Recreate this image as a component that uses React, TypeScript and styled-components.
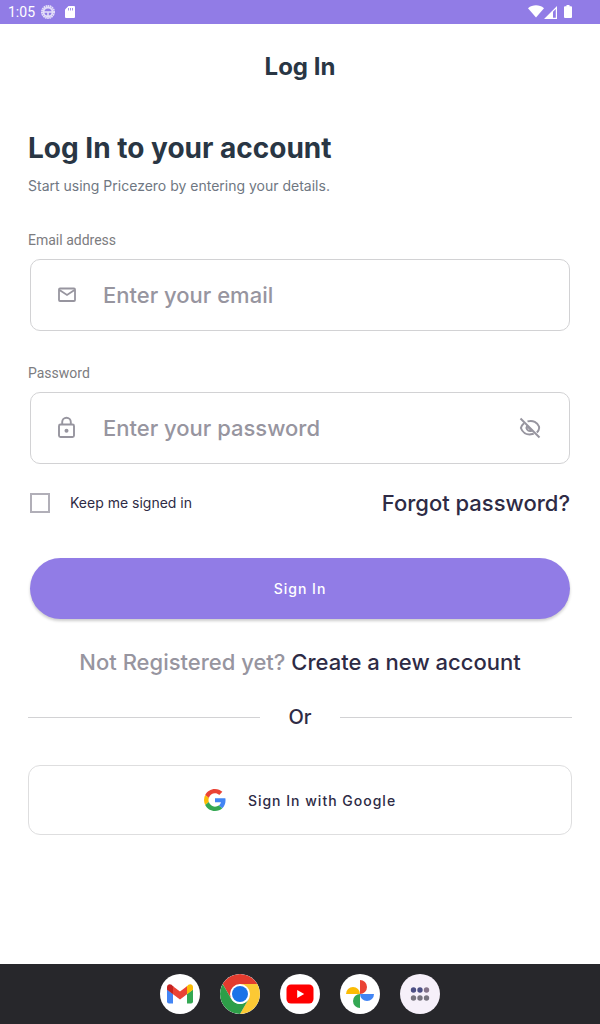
import React from "react";
import styled, { createGlobalStyle } from "styled-components";

const color = {
  brand: "#917ce6",
  heading: "#293644",
  ink: "#2e2b45",
  muted: "#97959f",
  label: "#7c7c80",
  line: "#d2d2d4",
  dock: "#27272b",
};

const GlobalStyle = createGlobalStyle`
  * { box-sizing: border-box; }
  body {
    margin: 0;
    background: #fff;
    color: ${color.ink};
    font-family: Inter, "Liberation Sans", sans-serif;
  }
  button, input { font-family: inherit; }
`;

const Screen = styled.div`
  min-height: 100vh;
  display: flex;
  flex-direction: column;
`;

const StatusBar = styled.header`
  height: 24px;
  padding: 0 28px 0 8px;
  display: flex;
  align-items: center;
  justify-content: space-between;
  background: ${color.brand};
  color: #fff;
  font: 14px/24px Roboto, sans-serif;
`;

const StatusGroup = styled.div<{ $gap: number }>`
  display: flex;
  align-items: center;
  gap: ${(p) => p.$gap}px;
  svg { display: block; }
`;

const Main = styled.main`
  flex: 1;
  padding: 28px 28px 40px;
`;

const PageTitle = styled.h1`
  margin: 0 0 49px;
  font-size: 24px;
  line-height: 30px;
  font-weight: 700;
  text-align: center;
  color: ${color.heading};
`;

const Heading = styled.h2`
  margin: 0 0 11px;
  font-size: 28px;
  line-height: 34px;
  font-weight: 700;
  color: ${color.heading};
`;

const Intro = styled.p`
  margin: 0 0 34px;
  font-size: 14px;
  line-height: 20px;
  color: #6f7782;
`;

const Form = styled.form`
  display: flex;
  flex-direction: column;
`;

const FieldLabel = styled.label`
  font-size: 14px;
  line-height: 20px;
  font-family: Roboto, sans-serif;
  color: ${color.label};
`;

const FieldBox = styled.div<{ $after: number }>`
  height: 72px;
  margin: 9px 2px ${(p) => p.$after}px;
  padding: 0 27px 0 24px;
  display: flex;
  align-items: center;
  gap: 24px;
  border: 1px solid ${color.line};
  border-radius: 10px;
  color: ${color.muted};
  svg { display: block; flex: none; }
`;

const TextInput = styled.input`
  flex: 1;
  min-width: 0;
  height: 40px;
  padding: 0;
  border: 0;
  outline: 0;
  background: transparent;
  color: ${color.ink};
  font-size: 22px;
  font-weight: 500;
  &::placeholder { color: ${color.muted}; opacity: 1; }
`;

const IconButton = styled.button`
  padding: 0;
  border: 0;
  background: none;
  color: inherit;
`;

const OptionsRow = styled.div`
  margin: 0 2px 41px;
  display: flex;
  align-items: center;
  justify-content: space-between;
  line-height: 28px;
`;

const CheckLabel = styled.label`
  display: flex;
  align-items: center;
  gap: 20px;
  font-size: 14px;
`;

const Checkbox = styled.input`
  appearance: none;
  width: 20px;
  height: 20px;
  margin: 0;
  border: 2px solid #b1afb8;
  &:checked { background: ${color.brand}; }
`;

const TextLink = styled.a`
  font-size: 22px;
  line-height: 28px;
  font-weight: 500;
  color: ${color.ink};
  text-decoration: none;
`;

const SubmitButton = styled.button`
  height: 61px;
  margin: 0 2px 29px;
  border: 0;
  border-radius: 31px;
  background: ${color.brand};
  color: #fff;
  font-size: 14px;
  font-weight: 500;
  letter-spacing: 1px;
  box-shadow: 0 2px 3px rgba(0, 0, 0, 0.2);
`;

const Register = styled.p`
  margin: 0 0 27px;
  font-size: 22px;
  line-height: 28px;
  font-weight: 500;
  text-align: center;
  color: ${color.muted};
`;

const Divider = styled.div`
  margin-bottom: 34px;
  display: flex;
  align-items: center;
  gap: 28px;
  font-size: 20px;
  line-height: 28px;
  font-weight: 500;
  &::before, &::after {
    content: "";
    flex: 1;
    height: 1px;
    background: ${color.line};
  }
`;

const GoogleButton = styled.button`
  width: 100%;
  height: 70px;
  padding: 0;
  display: flex;
  align-items: center;
  justify-content: center;
  gap: 22px;
  border: 1px solid #dededf;
  border-radius: 12px;
  background: #fff;
  color: ${color.ink};
  font-size: 14px;
  font-weight: 500;
  letter-spacing: 1px;
`;

const Dock = styled.nav`
  height: 60px;
  display: flex;
  align-items: center;
  justify-content: center;
  gap: 20px;
  background: ${color.dock};
`;

const AppButton = styled.button<{ $tint?: string }>`
  width: 40px;
  height: 40px;
  padding: 0;
  border: 0;
  border-radius: 50%;
  overflow: hidden;
  background: ${(p) => p.$tint ?? "#fff"};
  svg { display: block; }
`;

const MailIcon = () => (
  <svg width="24" height="24" viewBox="0 0 24 24" fill="none" stroke="currentColor" strokeWidth="1.800">
    <rect x="4" y="5.500" width="16" height="12.500" rx="1" />
    <path d="M4.500 7 12 12l7.500-5" />
  </svg>
);

const LockIcon = () => (
  <svg width="24" height="24" viewBox="0 0 24 24" fill="none" stroke="currentColor" strokeWidth="1.900">
    <rect x="4" y="8.500" width="15" height="12.500" rx="1.500" />
    <path d="M7.200 8.500V6a4.300 4.300 0 0 1 8.600 0v2.500" />
    <circle cx="11.500" cy="14.800" r="2" fill="currentColor" stroke="none" />
  </svg>
);

const EyeOffIcon = () => (
  <svg width="24" height="24" viewBox="0 0 24 24" fill="none" stroke="currentColor" strokeWidth="2">
    <path d="m2.500 2.500 19 19" />
    <path d="M9.500 5.400C15 3.700 19.500 6.500 21 10.500c.4 1.300.2 2.500-.4 3.600-.4.900-1 1.700-1.800 2.400" />
    <path d="M6 7.200C4.500 8.400 3.300 10 2.900 12c1.500 4.500 5.600 6.900 10.100 6.300 1-.1 1.900-.4 2.700-.8" />
    <path d="M9.200 9.600c-1.700 2.700.4 6 3.600 5.400.7-.1 1.300-.4 1.800-.8" />
    <path d="M9.500 10.500 13.500 14.500" />
  </svg>
);

const GoogleIcon = () => (
  <svg width="22" height="22" viewBox="0 0 48 48">
    <path fill="#ea4335" d="M24 9.500c3.540 0 6.710 1.220 9.210 3.600l6.850-6.850C35.900 2.380 30.470 0 24 0 14.620 0 6.510 5.380 2.560 13.220l7.980 6.190C12.430 13.720 17.740 9.500 24 9.500z" />
    <path fill="#4285f4" d="M46.980 24.550c0-1.570-.15-3.090-.38-4.550H24v9.020h12.940c-.58 2.960-2.260 5.480-4.780 7.180l7.730 6c4.510-4.180 7.090-10.360 7.090-17.650z" />
    <path fill="#fbbc05" d="M10.530 28.590A14.500 14.500 0 0 1 9.770 24c0-1.600.27-3.140.76-4.590l-7.980-6.190A23.900 23.900 0 0 0 0 24c0 3.880.92 7.540 2.560 10.780l7.970-6.190z" />
    <path fill="#34a853" d="M24 48c6.480 0 11.930-2.130 15.890-5.810l-7.730-6c-2.150 1.450-4.920 2.300-8.160 2.300-6.260 0-11.570-4.220-13.470-9.910l-7.980 6.190C6.510 42.620 14.620 48 24 48z" />
  </svg>
);

const RingIcon = () => (
  <svg width="14" height="14" viewBox="0 0 14 14" fill="none" stroke="#fff" opacity="0.75">
    <circle cx="7" cy="7" r="6" strokeWidth="2" strokeDasharray="1.600 .5" />
    <circle cx="7" cy="7" r="4.500" strokeWidth="1.800" />
    <path d="M3 7h8M7 7v4" strokeWidth="1.600" />
  </svg>
);

const SdCardIcon = () => (
  <svg width="10" height="12" viewBox="0 0 10 12">
    <path fill="#fff" d="M3.500 0H9a1 1 0 0 1 1 1v10a1 1 0 0 1-1 1H1a1 1 0 0 1-1-1V3.500z" />
    <path stroke={color.brand} strokeWidth="0.800" d="M3.500 2v2.500M5.500 2v2.500M7.500 2v2.500" />
  </svg>
);

const WifiIcon = () => (
  <svg width="16" height="14" viewBox="0 0 16 14">
    <path fill="#fff" d="M0 3.200C4.700-.6 11.300-.6 16 3.200L8 12.500z" />
  </svg>
);

const SignalIcon = () => (
  <svg width="13" height="13" viewBox="0 0 13 13">
    <path fill="#fff" d="M13 0v13H0zm-1.200 3L9 5.800v6h2.800z" fillRule="evenodd" />
  </svg>
);

const BatteryIcon = () => (
  <svg width="8" height="15" viewBox="0 0 8 15">
    <path fill="#fff" d="M2.500 0h3v1.300H7a1 1 0 0 1 1 1V12a1 1 0 0 1-1 1H1a1 1 0 0 1-1-1V2.300a1 1 0 0 1 1-1h1.500z" />
  </svg>
);

const GmailIcon = () => (
  <svg width="40" height="40" viewBox="0 0 40 40">
    <path fill="#4285f4" d="M7 15.500l6 4.500v9.500H9a2 2 0 0 1-2-2z" />
    <path fill="#34a853" d="M33 15.500 27 20v9.500h4a2 2 0 0 0 2-2z" />
    <path fill="#fbbc04" d="M27 12.200v8l6-4.500V13c0-2.500-2.700-3.700-4.600-2.200z" />
    <path fill="#ea4335" d="M13 20.200v-8l7 5.200 7-5.200v8l-7 5.300z" />
    <path fill="#c5221f" d="M7 13v2.700l6 4.500v-8l-1.400-1.400C9.700 9.300 7 10.500 7 13z" />
  </svg>
);

const ChromeIcon = () => (
  <svg width="40" height="40" viewBox="0 0 40 40">
    <path fill="#e33b2e" d="M2.680 10a20 20 0 0 1 34.640 0H20L11.340 25z" />
    <path fill="#fcc934" d="M37.320 10A20 20 0 0 1 20 40l8.660-15L20 10z" />
    <path fill="#2d9e48" d="M20 40A20 20 0 0 1 2.680 10l8.660 15a10 10 0 0 0 17.320 0z" />
    <circle cx="20" cy="20" r="10" fill="#fff" />
    <circle cx="20" cy="20" r="8" fill="#1a73e8" />
  </svg>
);

const YouTubeIcon = () => (
  <svg width="40" height="40" viewBox="0 0 40 40">
    <rect x="6.500" y="10.500" width="27" height="19" rx="4.500" fill="#f00" />
    <path fill="#fff" d="M17.200 16v8l7-4z" />
  </svg>
);

const PhotosIcon = () => (
  <svg width="40" height="40" viewBox="0 0 40 40">
    <path fill="#ea4335" d="M20 6a7 7 0 0 1 0 14z" />
    <path fill="#4285f4" d="M34 20a7 7 0 0 1-14 0z" />
    <path fill="#34a853" d="M20 34a7 7 0 0 1 0-14z" />
    <path fill="#fbbc04" d="M6 20a7 7 0 0 1 14 0z" />
  </svg>
);

const AllAppsIcon = () => (
  <svg width="40" height="40" viewBox="0 0 40 40">
    {["#4c4f85", "#4c4f85", "#84748a", "#77747f", "#77747f", "#77747f"].map((fill, i) => (
      <circle key={i} cx={13.500 + (i % 3) * 6.500} cy={i < 3 ? 16 : 24} r="2.700" fill={fill} />
    ))}
  </svg>
);

export default function App() {
  return (
    <Screen>
      <GlobalStyle />
      <StatusBar>
        <StatusGroup $gap={6}>
          <span>1:05</span>
          <StatusGroup $gap={10}>
            <RingIcon />
            <SdCardIcon />
          </StatusGroup>
        </StatusGroup>
        <StatusGroup $gap={7}>
          <StatusGroup $gap={0}>
            <WifiIcon />
            <SignalIcon />
          </StatusGroup>
          <BatteryIcon />
        </StatusGroup>
      </StatusBar>

      <Main>
        <PageTitle>Log In</PageTitle>
        <Heading>Log In to your account</Heading>
        <Intro>Start using Pricezero by entering your details.</Intro>

        <Form onSubmit={(e) => e.preventDefault()}>
          <FieldLabel htmlFor="email">Email address</FieldLabel>
          <FieldBox $after={32}>
            <MailIcon />
            <TextInput id="email" type="email" placeholder="Enter your email" />
          </FieldBox>

          <FieldLabel htmlFor="password">Password</FieldLabel>
          <FieldBox $after={25}>
            <LockIcon />
            <TextInput id="password" type="password" placeholder="Enter your password" />
            <IconButton type="button" aria-label="Show password">
              <EyeOffIcon />
            </IconButton>
          </FieldBox>

          <OptionsRow>
            <CheckLabel>
              <Checkbox type="checkbox" />
              Keep me signed in
            </CheckLabel>
            <TextLink href="#forgot">Forgot password?</TextLink>
          </OptionsRow>

          <SubmitButton type="submit">Sign In</SubmitButton>
        </Form>

        <Register>
          Not Registered yet? <TextLink href="#register">Create a new account</TextLink>
        </Register>
        <Divider>Or</Divider>
        <GoogleButton type="button">
          <GoogleIcon />
          Sign In with Google
        </GoogleButton>
      </Main>

      <Dock aria-label="Apps">
        <AppButton aria-label="Gmail"><GmailIcon /></AppButton>
        <AppButton aria-label="Chrome"><ChromeIcon /></AppButton>
        <AppButton aria-label="YouTube"><YouTubeIcon /></AppButton>
        <AppButton aria-label="Photos"><PhotosIcon /></AppButton>
        <AppButton aria-label="All apps" $tint="#f6f0fa"><AllAppsIcon /></AppButton>
      </Dock>
    </Screen>
  );
}
